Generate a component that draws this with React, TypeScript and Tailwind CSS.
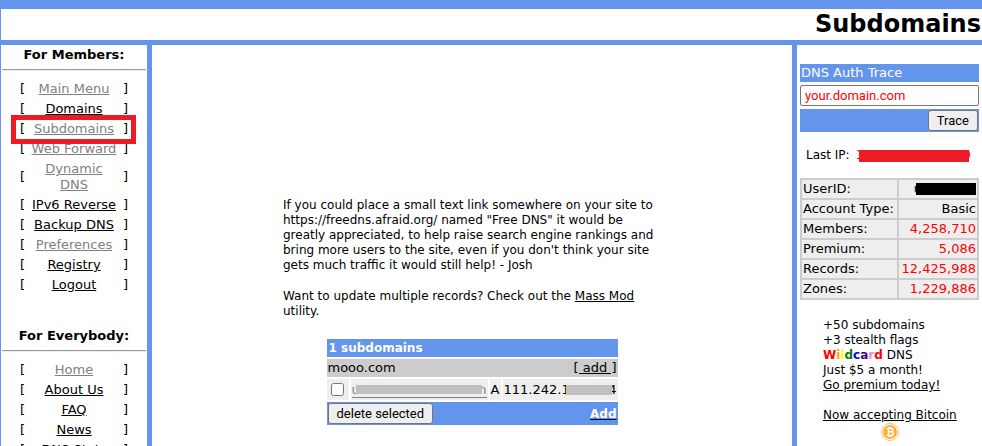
import type { ReactNode } from "react";

type NavItem = { label: string; visited?: boolean; marked?: boolean };

const memberLinks: NavItem[] = [
  { label: "Main Menu", visited: true },
  { label: "Domains" },
  { label: "Subdomains", visited: true, marked: true },
  { label: "Web Forward", visited: true },
  { label: "Dynamic DNS", visited: true },
  { label: "IPv6 Reverse" },
  { label: "Backup DNS" },
  { label: "Preferences", visited: true },
  { label: "Registry" },
  { label: "Logout" },
];

const publicLinks: NavItem[] = [
  { label: "Home", visited: true },
  { label: "About Us" },
  { label: "FAQ" },
  { label: "News" },
  { label: "DNS Stats" },
];

const stats: { label: string; value: ReactNode; red?: boolean }[] = [
  {
    label: "UserID:",
    value: (
      <span className="flex items-center justify-end overflow-hidden">
        u<span className="-ml-1.5 h-3 w-[60px] bg-black" />
      </span>
    ),
  },
  { label: "Account Type:", value: "Basic" },
  { label: "Members:", value: "4,258,710", red: true },
  { label: "Premium:", value: "5,086", red: true },
  { label: "Records:", value: "12,425,988", red: true },
  { label: "Zones:", value: "1,229,886", red: true },
];

const wildcard = [
  ["W", "text-[#ff0000]"],
  ["i", "text-[#ffa500]"],
  ["l", "text-[#ffff00]"],
  ["d", "text-[#008000]"],
  ["c", "text-[#0000ff]"],
  ["a", "text-[#4b0082]"],
  ["r", "text-[#ee82ee]"],
  ["d", "text-[#ff0000]"],
];

function NavSection({ title, items }: { title: string; items: NavItem[] }) {
  return (
    <section>
      <h2 className="text-center font-bold leading-4">{title}</h2>
      <hr className="mx-px mt-1.5 h-0.5 border-t border-b border-t-[#9a9a9a] border-b-[#eeeeee]" />
      <ul className="mx-auto mt-2 w-[108px]">
        {items.map((item) => (
          <li key={item.label} className="relative flex items-center justify-between py-0.5 leading-4">
            <span>[</span>
            <a
              href="#"
              className={`w-[88px] text-center underline ${item.visited ? "text-[#808080]" : "text-black"}`}
            >
              {item.label}
            </a>
            <span>]</span>
            {item.marked && (
              <span className="pointer-events-none absolute -top-1 -right-2 -left-[9px] z-10 h-[29px] border-[5px] border-[#ed1c24]" />
            )}
          </li>
        ))}
      </ul>
    </section>
  );
}

function BitcoinIcon() {
  return (
    <svg viewBox="0 0 18 18" className="h-[18px] w-[18px]" aria-label="Bitcoin">
      <circle cx="9" cy="9" r="8.5" fill="#fff" stroke="#fbb040" strokeWidth="0.8" />
      <circle cx="9" cy="9" r="7" fill="#fbb034" />
      <path
        d="M5.6 5.4h4.300c1.400 0 2.100.6 2.100 1.600S11.300 8.700 10.300 8.800c1.300.1 2 .8 2 1.900 0 1.300-.9 1.900-2.500 1.900H5.600M7.500 5.400v7.200M7.500 8.800h3M8 4v1.400M10 4v1.400M8 12.600V14M10 12.600V14"
        fill="none"
        stroke="#fff"
        strokeWidth="1.500"
      />
    </svg>
  );
}

export default function App() {
  return (
    <div className="flex h-screen flex-col overflow-hidden bg-[#6495ed] pt-[9px] pl-px font-['Verdana','DejaVu_Sans',sans-serif] text-[13px] text-black">
      <header className="shrink-0 bg-white pr-px text-right">
        <h1 className="text-2xl leading-[31px] font-bold">Subdomains</h1>
      </header>

      <div className="mt-[5px] flex min-h-0 grow gap-[5px]">
        <nav className="flex w-[146px] shrink-0 flex-col gap-[33px] bg-white pt-0.5">
          <NavSection title="For Members:" items={memberLinks} />
          <NavSection title="For Everybody:" items={publicLinks} />
        </nav>

        <main className="flex min-w-0 grow flex-col items-center bg-white pt-[153px]">
          <div className="w-[378px] text-xs leading-[15px] whitespace-nowrap">
            <p>
              If you could place a small text link somewhere on your site to
              <br />
              https://freedns.afraid.org/ named "Free DNS" it would be
              <br />
              greatly appreciated, to help raise search engine rankings and
              <br />
              bring more users to the site, even if you don't think your site
              <br />
              gets much traffic it would still help! - Josh
            </p>
            <p className="mt-4">
              Want to update multiple records? Check out the{" "}
              <a href="#" className="underline">
                Mass Mod
              </a>
              <br />
              utility.
            </p>
          </div>

          <table className="mt-[18px] w-[295px] border-separate border-spacing-0.5 leading-4 whitespace-nowrap">
            <tbody>
              <tr>
                <th colSpan={4} className="h-[18px] bg-[#6495ed] px-0.5 py-px text-left text-xs leading-4 text-white">
                  1 subdomains
                </th>
              </tr>
              <tr>
                <td colSpan={4} className="h-[18px] bg-[#cccccc] px-px py-px">
                  <div className="flex justify-between">
                    <span>mooo.com</span>
                    <a href="#" className="underline">
                      [ add ]
                    </a>
                  </div>
                </td>
              </tr>
              <tr className="h-[21px] bg-[#eeeeee]">
                <td className="w-[22px]">
                  <input
                    type="checkbox"
                    aria-label="Select subdomain"
                    className="mx-auto block h-[13px] w-[13px]"
                  />
                </td>
                <td className="w-[137px] px-px">
                  <a href="#" className="flex items-center overflow-hidden border-b border-[#808080] leading-[15px] text-[#808080]">
                    u<span className="z-10 -ml-1 h-[9px] grow bg-[#c0c0c0]" />
                    <span className="-ml-1">n</span>
                  </a>
                </td>
                <td className="w-[11px] px-px">A</td>
                <td className="px-px">
                  <div className="flex items-center justify-between overflow-hidden">
                    111.242.1
                    <span className="z-10 -mx-1 h-2.5 grow bg-[#c0c0c0]" />4
                  </div>
                </td>
              </tr>
              <tr>
                <td colSpan={4} className="h-[23px] bg-[#6495ed] px-px">
                  <div className="flex items-center justify-between">
                    <button
                      type="button"
                      className="h-[21px] rounded-[3px] border border-[#767676] bg-[#efefef] px-2 font-['Roboto',sans-serif] text-[13px] leading-[19px]"
                    >
                      delete selected
                    </button>
                    <a href="#" className="text-xs font-bold text-white underline decoration-black">
                      Add
                    </a>
                  </div>
                </td>
              </tr>
            </tbody>
          </table>
        </main>

        <aside className="w-[185px] shrink-0 bg-white pt-[19px] pr-[3px] pl-[3px]">
          <form onSubmit={(e) => e.preventDefault()}>
            <label htmlFor="trace" className="block h-[18px] bg-[#6495ed] px-px leading-[18px] text-white">
              DNS Auth Trace
            </label>
            <input
              id="trace"
              type="text"
              defaultValue="your.domain.com"
              className="mt-[3px] block h-[21px] w-full rounded-[2px] border border-[#767676] bg-white px-1 font-['Roboto',sans-serif] text-[13px] text-[#ff0000]"
            />
            <div className="mt-[3px] flex h-[23px] items-center justify-end bg-[#6495ed] pr-px">
              <button
                type="submit"
                className="h-[21px] rounded-[3px] border border-[#767676] bg-[#efefef] px-2 font-['Roboto',sans-serif] text-[13px] leading-[19px]"
              >
                Trace
              </button>
            </div>
          </form>

          <p className="mt-4 flex items-center pl-1.5 text-xs leading-[15px]">
            Last IP:
            <span className="ml-1.5 text-[#ff0000]">1</span>
            <span className="z-10 -ml-1 h-3 w-[110px] bg-[#ed1c24]" />
            <span className="-ml-1.5 text-[#ff0000]">0</span>
          </p>

          <table className="mt-[15px] w-full border-collapse leading-4">
            <tbody>
              {stats.map((s) => (
                <tr key={s.label} className="h-5">
                  <th
                    scope="row"
                    className="border-2 border-[#cccccc] bg-[#eeeeee] px-px py-px text-left font-normal whitespace-nowrap"
                  >
                    {s.label}
                  </th>
                  <td
                    className={`border-2 border-[#cccccc] bg-[#eeeeee] px-px py-px text-right ${s.red ? "text-[#ff0000]" : ""}`}
                  >
                    {s.value}
                  </td>
                </tr>
              ))}
            </tbody>
          </table>

          <div className="mt-[18px] pl-[23px] text-xs leading-[15px] whitespace-nowrap">
            <p>+50 subdomains</p>
            <p>+3 stealth flags</p>
            <p>
              <b>
                {wildcard.map(([letter, color], i) => (
                  <span key={i} className={color}>
                    {letter}
                  </span>
                ))}
              </b>{" "}
              DNS
            </p>
            <p>Just $5 a month!</p>
            <a href="#" className="block underline">
              Go premium today!
            </a>
            <a href="#" className="mt-[15px] inline-flex flex-col items-center underline">
              Now accepting Bitcoin
              <BitcoinIcon />
            </a>
          </div>
        </aside>
      </div>
    </div>
  );
}
